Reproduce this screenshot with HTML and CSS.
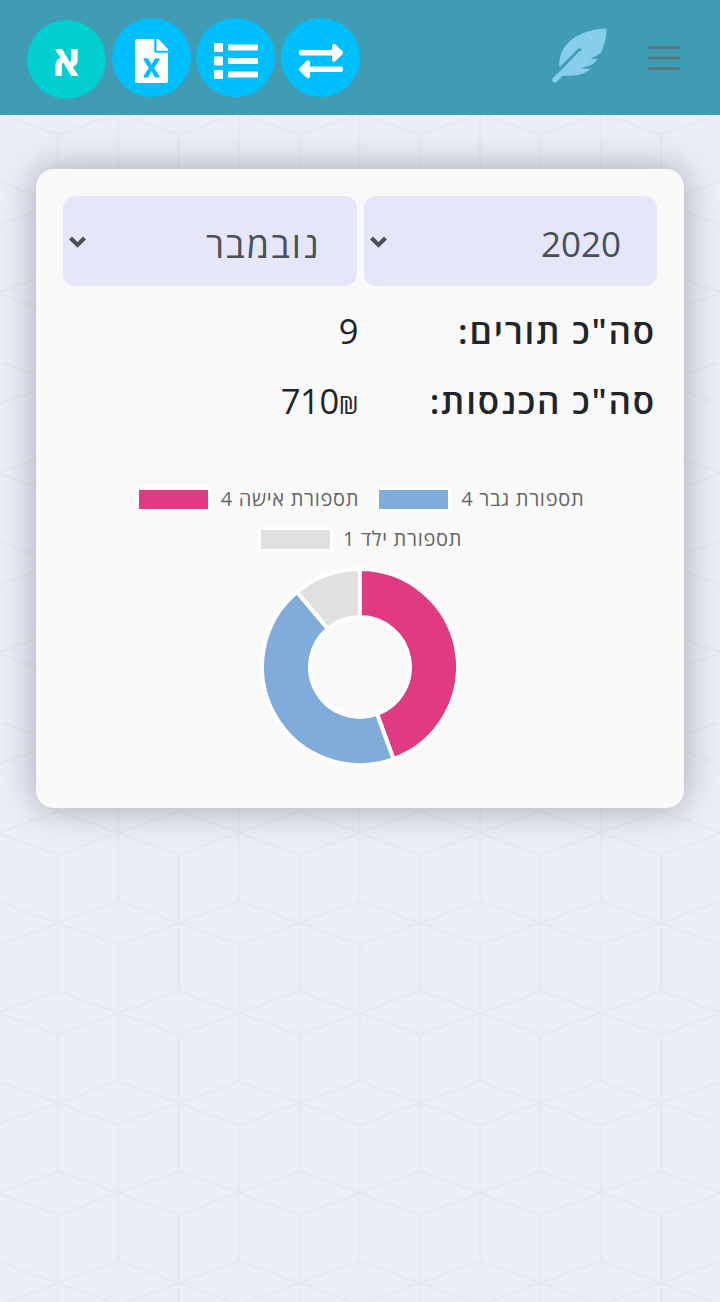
FILE: index.html
```html
<!DOCTYPE html>
<html lang="he" dir="rtl">
<head>
<meta charset="utf-8">
<title>סיכום חודשי</title>
<link rel="stylesheet" href="styles.css">
</head>
<body>
<svg class="backdrop" aria-hidden="true">
  <defs>
    <pattern id="cubes" x="-2.2" y="113" width="120.6" height="180" patternUnits="userSpaceOnUse">
      <path class="cube-line" d="M0 0L60.3-21.8L120.6 0L60.3 21.8ZM0 180L60.3 158.2L120.6 180M0 68.2L60.3 90L0 111.8M120.6 68.2L60.3 90L120.6 111.8M60.3 21.8V158.2M0 0V68.2M0 111.8V180M120.6 0V68.2M120.6 111.8V180"/>
    </pattern>
  </defs>
  <rect width="100%" height="100%" fill="url(#cubes)"/>
</svg>
<header class="topbar">
  <div class="brand">
    <svg class="menu" viewBox="0 0 32 24"><path d="M1 1.5H31M1 12H31M1 22.5H31"/></svg>
    <svg class="feather" viewBox="66 85 166 165"><path d="M231 86C150 88 84 130 88 204L145 147Q150 142 154 147Q157 151 153 155L88 219L99 228C134 230 160 227 183 208L152 206Q182 200 191 192L205 178L182 177Q202 168 213 160Q229 131 231 86Z"/><path d="M99 228L81 246Q75 251 69 247Q64 241 69 235L96 209L150 153L156 160Z"/></svg>
  </div>
  <nav class="actions">
    <button class="round"><svg class="icon swap" viewBox="0 0 512 512"><path d="M0 168v-16c0-13.255 10.745-24 24-24h360V80c0-21.367 25.899-32.042 40.971-16.971l80 80c9.372 9.373 9.372 24.569 0 33.941l-80 80C409.956 271.982 384 261.456 384 240v-48H24c-13.255 0-24-10.745-24-24zm488 152H128v-48c0-21.314-25.862-32.08-40.971-16.971l-80 80c-9.372 9.373-9.372 24.569 0 33.941l80 80C102.057 463.997 128 453.437 128 432v-48h360c13.255 0 24-10.745 24-24v-16c0-13.255-10.745-24-24-24z"/></svg></button>
    <button class="round"><svg class="icon" viewBox="0 0 44 44"><path d="M1 4h7q1 0 1 1v7q0 1-1 1h-7q-1 0-1-1v-7q0-1 1-1zM1 17.6h7q1 0 1 1v7q0 1-1 1h-7q-1 0-1-1v-7q0-1 1-1zM1 31h7q1 0 1 1v7q0 1-1 1h-7q-1 0-1-1v-7q0-1 1-1zM15 5.4h28q1 0 1 1v4q0 1-1 1h-28q-1 0-1-1v-4q0-1 1-1zM15 19h28q1 0 1 1v4q0 1-1 1h-28q-1 0-1-1v-4q0-1 1-1zM15 32.4h28q1 0 1 1v4q0 1-1 1h-28q-1 0-1-1v-4q0-1 1-1z"/></svg></button>
    <button class="round"><svg class="icon" viewBox="0 0 384 512"><path d="M224 136V0H24C10.700 0 0 10.700 0 24v464c0 13.300 10.700 24 24 24h336c13.300 0 24-10.700 24-24V160H248c-13.200 0-24-10.800-24-24zm60.100 106.500L224 336l60.100 93.500c5.100 8-.6 18.500-10.100 18.500h-34.900c-4.400 0-8.500-2.400-10.600-6.300C208.900 405.500 192 373 192 373c-6.400 14.800-10 20-36.600 68.800-2.100 3.900-6.100 6.300-10.500 6.300H110c-9.500 0-15.200-10.500-10.100-18.500l60.300-93.500-60.300-93.500c-5.200-8 .6-18.500 10.100-18.500h34.800c4.400 0 8.500 2.400 10.600 6.300 26.100 48.800 20 33.600 36.600 68.500 0 0 6.100-11.700 36.600-68.500 2.100-3.900 6.200-6.300 10.600-6.300H274c9.500-.1 15.200 10.400 10.100 18.400zM384 136H250V0h12c6.400 0 12.500 2.500 17 7l98 104c4.500 4.500 7 10.600 7 16.900z"/></svg></button>
    <button class="round letter"><span>א</span></button>
  </nav>
</header>
<main class="card">
  <div class="filters">
    <div class="select"><span class="year">2020</span><svg class="chevron" viewBox="0 0 17 12"><path d="M1.500 2L8.500 9L15.500 2"/></svg></div>
    <div class="select"><span class="month">נובמבר</span><svg class="chevron" viewBox="0 0 17 12"><path d="M1.500 2L8.500 9L15.500 2"/></svg></div>
  </div>
  <dl class="totals">
    <dt>סה"כ תורים:</dt><dd>9</dd>
    <dt>סה"כ הכנסות:</dt><dd dir="ltr">710<span class="shekel">₪</span></dd>
  </dl>
  <div class="legend">
    <div class="item"><span>תספורת גבר 4</span><i class="swatch blue"></i></div>
    <div class="item"><span>תספורת אישה 4</span><i class="swatch pink"></i></div>
    <div class="item"><span>תספורת ילד 1</span><i class="swatch grey"></i></div>
  </div>
  <svg class="donut" viewBox="-100 -100 200 200">
    <path class="pink" d="M0-98A98 98 0 0 1 33.520 92.090L17.100 46.980A50 50 0 0 0 0-50Z"/>
    <path class="blue" d="M33.520 92.090A98 98 0 0 1-62.990-75.070L-32.140-38.300A50 50 0 0 0 17.100 46.980Z"/>
    <path class="grey" d="M-62.990-75.070A98 98 0 0 1 0-98V-50A50 50 0 0 0-32.140-38.300Z"/>
  </svg>
</main>
</body>
</html>
```
FILE: styles.css
```css
* { box-sizing: border-box; }
body {
  margin: 0;
  min-height: 1302px;
  background: #ebeef8;
  color: #212529;
  font-family: "Open Sans", "Noto Sans", sans-serif;
  overflow: hidden;
}
.backdrop { position: absolute; inset: 0; width: 100%; height: 1302px; z-index: -1; }
.cube-line { fill: none; stroke: #e6e8ef; stroke-width: 2.2; }
.topbar {
  height: 115px;
  padding: 18px 40px 0 27px;
  background: #3f9cb2;
  display: flex;
  justify-content: space-between;
}
.brand { display: flex; gap: 41px; padding-top: 10px; }
.menu { width: 32px; height: 24px; margin-top: 18px; fill: none; stroke: #5f727b; stroke-width: 2.4; stroke-linecap: round; }
.feather { width: 55px; height: 55px; fill: #87ceeb; }
.actions { display: flex; gap: 5.600px; }
.round {
  width: 79px;
  height: 79px;
  padding: 6px 0 0;
  border: 0;
  border-radius: 50%;
  background: #00bfff;
  display: flex;
  align-items: center;
  justify-content: center;
}
.icon { height: 44px; fill: #fff; }
.swap { margin-left: 1px; }
.letter {
  margin-top: 2px;
  padding: 0;
  background: #00ced1;
  color: #fff;
  font: 700 42px/50px "Open Sans", "Noto Sans", sans-serif;
}
.card {
  margin: 54px 36px 0;
  height: 639px;
  padding: 27px;
  border-radius: 18px;
  background: #f9f9f9;
  box-shadow: 0 0 36px rgba(0, 0, 0, .3);
}
.filters { display: flex; gap: 7px; }
.select {
  flex: 1;
  height: 90px;
  padding: 5px 36px 0 6px;
  border-radius: 12px;
  background: #e5e6fa;
  color: #495057;
  display: flex;
  align-items: center;
  justify-content: space-between;
  font-size: 36px;
}
.year { font-size: 35px; }
.month { padding-top: 1px; letter-spacing: 2px; }
.chevron { width: 17px; height: 12px; margin-bottom: 3px; fill: none; stroke: #495057; stroke-width: 4; }
.totals {
  margin: 9px 1px 0 2px;
  display: grid;
  grid-template-columns: 298px 1fr;
  grid-auto-rows: 70px;
  align-items: center;
  font-size: 35px;
}
dt { font-weight: 600; letter-spacing: 1.800px; }
dd { margin: 0; text-align: right; font-size: 34.500px; letter-spacing: -.400px; }
.shekel { font-size: 25px; }
.legend {
  margin-top: 43px;
  display: flex;
  flex-wrap: wrap;
  justify-content: center;
  gap: 0 17px;
  font-size: 20px;
  letter-spacing: .700px;
  color: #666;
}
.item { height: 40px; display: flex; align-items: center; gap: 10px; }
.swatch { width: 75px; height: 25px; margin-top: 3px; border: 3px solid #fff; }
.swatch.pink { background: #df3a82; }
.swatch.blue { background: #80acdc; }
.swatch.grey { background: #e0e0e0; }
.donut { display: block; width: 200px; height: 200px; margin: 9px auto 0; stroke: #fff; stroke-width: 4; }
.donut .pink { fill: #df3a82; }
.donut .blue { fill: #80acdc; }
.donut .grey { fill: #e0e0e0; }
```
